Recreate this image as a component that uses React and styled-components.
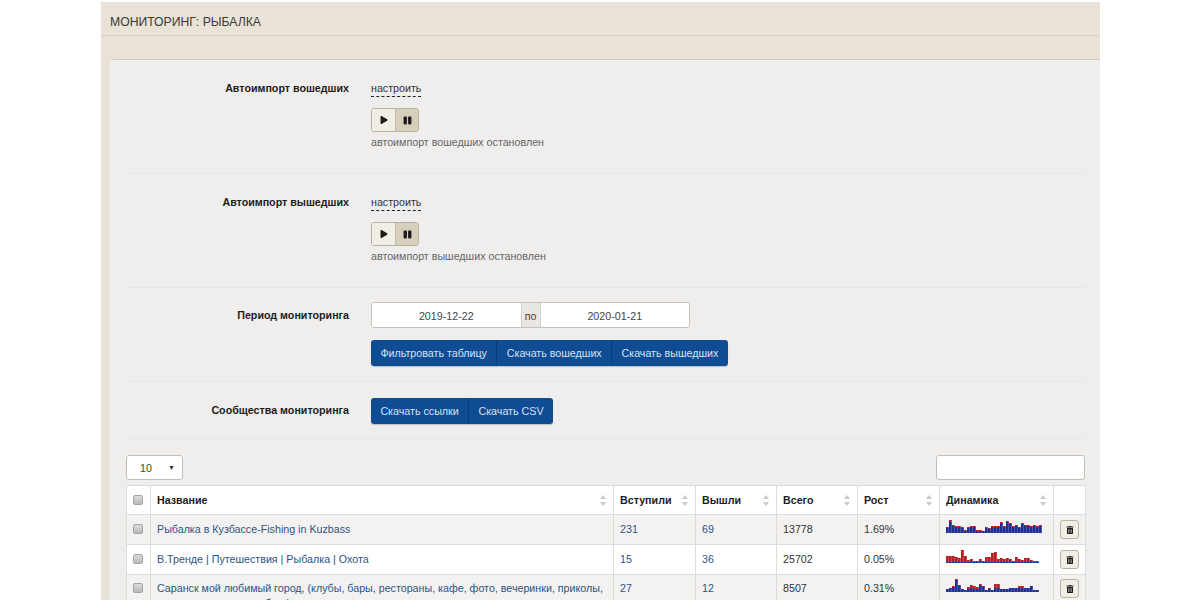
import React from "react";
import styled, { createGlobalStyle } from "styled-components";
import { FaPlay, FaPause, FaTrashAlt } from "react-icons/fa";

const GlobalStyle = createGlobalStyle`
  html, body {
    margin: 0;
    padding: 0;
    height: 600px;
    overflow: hidden;
    background: #fff;
    font-family: "Liberation Sans", Arial, sans-serif;
    font-size: 10.7px;
    color: #333;
  }
`;

const Page = styled.div`
  width: 999px;
  margin: 2px 0 0 101px;
  background: #e9e2d6;
  padding-left: 9px;
  box-sizing: border-box;
`;

const TitleBar = styled.div`
  height: 34px;
  margin-left: -9px;
  padding: 6px 0 0 9px;
  border-bottom: 1px solid #d8d0c2;
  display: flex;
  align-items: center;
  box-sizing: border-box;
  font-size: 12.2px;
  color: #3a3a38;
`;

const Panel = styled.div`
  margin-top: 23px;
  padding: 0 15px 0 14px;
  background: #efeeed;
  border-top: 1px solid #cfc9bd;
  border-top-left-radius: 4px;
  border-left: 1px solid #f6f5f3;
`;

const FormRow = styled.div`
  display: grid;
  grid-template-columns: 224px 1fr;
  column-gap: 22px;
  padding: ${(p) => p.$pad};
  border-bottom: 1px solid #e7e6e4;
`;

const RowLabel = styled.div`
  font-weight: bold;
  color: #1c1c1c;
  text-align: right;
  line-height: 14px;
  padding-top: ${(p) => p.$top || 0}px;
`;

const RowBody = styled.div`
  display: flex;
  flex-direction: column;
  align-items: flex-start;
`;

const SetupLink = styled.span`
  color: #333;
  line-height: 14px;
  padding-bottom: 1px;
  border-bottom: 1px dashed #222;
`;

const Toggle = styled.div`
  display: flex;
  margin-top: 11px;
  border: 1px solid #b9b2a2;
  border-radius: 3px;
  overflow: hidden;
`;

const ToggleButton = styled.div`
  width: 23px;
  height: 22px;
  box-sizing: border-box;
  display: flex;
  align-items: center;
  justify-content: center;
  font-size: ${(p) => (p.$active ? 9 : 8)}px;
  color: #1d1d1d;
  background: ${(p) => (p.$active ? "#d6cfbc" : "#f1eee5")};
  border-left: ${(p) => (p.$active ? "1px solid #c3bca9" : "0")};
`;

const Hint = styled.div`
  margin-top: 3px;
  color: #666;
  line-height: 14px;
`;

const DateGroup = styled.div`
  display: flex;
  width: 319px;
  height: 26px;
  box-sizing: border-box;
  border: 1px solid #c6c2ba;
  border-radius: 3px;
  overflow: hidden;
`;

const DateValue = styled.div`
  flex: 1;
  padding-top: 1px;
  background: #fff;
  display: flex;
  align-items: center;
  justify-content: center;
  color: #444;
`;

const DateAddon = styled.div`
  width: 20px;
  padding-top: 1px;
  box-sizing: border-box;
  background: #e9e7e4;
  border-left: 1px solid #d5d2cc;
  border-right: 1px solid #d5d2cc;
  display: flex;
  align-items: center;
  justify-content: center;
  color: #444;
`;

const ButtonGroup = styled.div`
  display: flex;
  margin-top: ${(p) => p.$top || 0}px;
  border-radius: 3px;
  overflow: hidden;
  box-shadow: 0 1px 1px rgba(0, 0, 0, 0.2);
`;

const BlueButton = styled.div`
  height: 26px;
  padding: 0 9.4px;
  display: flex;
  align-items: center;
  background: #0f4c93;
  color: #d6e2f0;
  white-space: nowrap;
  & + & {
    border-left: 1px solid #0b3c75;
  }
`;

const TableControls = styled.div`
  display: flex;
  justify-content: space-between;
  padding: 16px 0 5px;
`;

const PageSize = styled.div`
  width: 57px;
  height: 25px;
  margin-left: 1px;
  box-sizing: border-box;
  padding: 0 7px 0 13px;
  display: flex;
  align-items: center;
  justify-content: space-between;
  background: #fff;
  border: 1px solid #c2beb6;
  border-radius: 3px;
  color: #444;
`;

const Caret = styled.span`
  font-size: 7px;
  color: #333;
`;

const SearchBox = styled.div`
  width: 149px;
  height: 25px;
  box-sizing: border-box;
  background: #fff;
  border: 1px solid #c2beb6;
  border-radius: 3px;
`;

const Table = styled.table`
  table-layout: fixed;
  width: 959px;
  margin-left: 1px;
  border-collapse: collapse;
  font-size: 10.7px;
`;

const HeadCell = styled.th`
  height: 29px;
  padding: 0 6px;
  position: relative;
  box-sizing: border-box;
  background: #fff;
  border: 1px solid #dddcd9;
  text-align: left;
  font-weight: bold;
  color: #1c1c1c;
`;

const SortMark = styled.svg`
  position: absolute;
  right: 7px;
  top: 9px;
  width: 6px;
  height: 11px;
`;

const Row = styled.tr`
  background: ${(p) => (p.$odd ? "#f3f2f1" : "#fff")};
`;

const Cell = styled.td`
  height: 30px;
  padding: ${(p) => (p.$top === undefined ? "0 6px" : `${p.$top}px 6px`)};
  vertical-align: ${(p) => (p.$top === undefined ? "middle" : "top")};
  box-sizing: border-box;
  border: 1px solid #dddcd9;
  color: #333;
  line-height: 15px;
`;

const CheckCell = styled(Cell)`
  padding-left: 0;
  padding-right: 2px;
  text-align: center;
`;

const HeadCheckCell = styled(HeadCell)`
  padding: 0 2px 0 0;
  text-align: center;
`;

const Check = styled.span`
  display: inline-block;
  width: 10px;
  height: 10px;
  vertical-align: -1px;
  box-sizing: border-box;
  border: 1px solid #a5a5a5;
  border-radius: 2px;
  background: linear-gradient(#dcdcdc, #b9b9b9);
`;

const Link = styled.span`
  color: #2c5484;
`;

const SparkBox = styled.svg`
  display: block;
  margin-bottom: ${(p) => p.$gap}px;
`;

const TrashButton = styled.div`
  width: 17px;
  height: 17px;
  margin: 0 auto;
  display: flex;
  align-items: center;
  justify-content: center;
  font-size: 8px;
  color: #1d1d1d;
  background: #f1eee5;
  border: 1px solid #b9b2a2;
  border-radius: 3px;
`;

const columns = [
  { width: 24 },
  { width: 463, title: "Название" },
  { width: 82, title: "Вступили" },
  { width: 81, title: "Вышли" },
  { width: 81, title: "Всего" },
  { width: 82, title: "Рост" },
  { width: 114, title: "Динамика" },
  { width: 32 },
];

// [синие, красные]
const spark1 = [
  [5, 1], [11, 2], [7, 1], [6, 1], [6, 1], [5, 1], [2, 1], [5, 1], [6, 1], [6, 1], [2, 1],
  [2, 1], [2, 0], [5, 1], [4, 1], [6, 1], [6, 1], [6, 1], [10, 1], [6, 1], [11, 1], [9, 1],
  [6, 1], [7, 1], [5, 1], [9, 1], [7, 1], [7, 1], [6, 1], [7, 1], [6, 1], [7, 1],
];
const spark2 = [
  [1, 6], [1, 6], [1, 6], [1, 5], [1, 4], [1, 12], [1, 6], [1, 2], [1, 3], [1, 1], [1, 1],
  [1, 3], [1, 1], [1, 5], [1, 5], [1, 9], [1, 10], [1, 3], [1, 4], [1, 3], [1, 4], [1, 3],
  [1, 1], [1, 5], [1, 3], [1, 2], [1, 4], [1, 4], [1, 2], [1, 1], [1, 1],
];
const spark3 = [
  [3, 0], [4, 0], [5, 1], [12, 1], [6, 1], [3, 0], [2, 0], [3, 2], [4, 3], [3, 3], [3, 2],
  [7, 1], [5, 1], [2, 0], [3, 1], [2, 0], [4, 4], [4, 4], [3, 0], [3, 0], [3, 0], [4, 0],
  [4, 0], [4, 0], [4, 2], [4, 2], [4, 0], [4, 0], [6, 0], [2, 0], [2, 0],
];

const rows = [
  { name: "Рыбалка в Кузбассе-Fishing in Kuzbass", joined: 231, left: 69, total: 13778, growth: "1.69%", spark: spark1 },
  { name: "В.Тренде | Путешествия | Рыбалка | Охота", joined: 15, left: 36, total: 25702, growth: "0.05%", spark: spark2 },
  {
    name: "Саранск мой любимый город, (клубы, бары, рестораны, кафе, фото, вечеринки, приколы, новости, знакомства, блог)",
    joined: 27, left: 12, total: 8507, growth: "0.31%", spark: spark3, tall: true,
  },
];

const Sparkline = ({ data, gap }) => (
  <SparkBox width="96" height="14" $gap={gap}>
    {data.map(([blue, red], i) => (
      <g key={i}>
        <rect x={i * 3} y={14 - blue} width="2.8" height={blue} fill="#1f2f96" />
        <rect x={i * 3} y={14 - blue - red} width="2.8" height={red} fill="#b82022" />
      </g>
    ))}
  </SparkBox>
);

const Sort = () => (
  <SortMark viewBox="0 0 6 11">
    <path d="M3 0 L6 4 H0 Z M3 11 L0 7 H6 Z" fill="#c9c9c9" />
  </SortMark>
);

const PlayToggle = () => (
  <Toggle>
    <ToggleButton><FaPlay /></ToggleButton>
    <ToggleButton $active><FaPause /></ToggleButton>
  </Toggle>
);

export default function App() {
  return (
    <>
      <GlobalStyle />
      <Page>
        <TitleBar>МОНИТОРИНГ: РЫБАЛКА</TitleBar>
        <Panel>
          <FormRow $pad="21px 0 24px">
            <RowLabel>Автоимпорт вошедших</RowLabel>
            <RowBody>
              <SetupLink>настроить</SetupLink>
              <PlayToggle />
              <Hint>автоимпорт вошедших остановлен</Hint>
            </RowBody>
          </FormRow>
          <FormRow $pad="21px 0 24px">
            <RowLabel>Автоимпорт вышедших</RowLabel>
            <RowBody>
              <SetupLink>настроить</SetupLink>
              <PlayToggle />
              <Hint>автоимпорт вышедших остановлен</Hint>
            </RowBody>
          </FormRow>
          <FormRow $pad="14px 0 15px">
            <RowLabel $top={6}>Период мониторинга</RowLabel>
            <RowBody>
              <DateGroup>
                <DateValue>2019-12-22</DateValue>
                <DateAddon>по</DateAddon>
                <DateValue>2020-01-21</DateValue>
              </DateGroup>
              <ButtonGroup $top={12}>
                <BlueButton>Фильтровать таблицу</BlueButton>
                <BlueButton>Скачать вошедших</BlueButton>
                <BlueButton>Скачать вышедших</BlueButton>
              </ButtonGroup>
            </RowBody>
          </FormRow>
          <FormRow $pad="16px 0 14px">
            <RowLabel $top={5}>Сообщества мониторинга</RowLabel>
            <RowBody>
              <ButtonGroup>
                <BlueButton>Скачать ссылки</BlueButton>
                <BlueButton>Скачать CSV</BlueButton>
              </ButtonGroup>
            </RowBody>
          </FormRow>
          <TableControls>
            <PageSize>10 <Caret>▼</Caret></PageSize>
            <SearchBox />
          </TableControls>
          <Table>
            <colgroup>
              {columns.map((c, i) => <col key={i} style={{ width: c.width }} />)}
            </colgroup>
            <thead>
              <tr>
                <HeadCheckCell><Check /></HeadCheckCell>
                {columns.slice(1, -1).map((c) => (
                  <HeadCell key={c.title}>{c.title}<Sort /></HeadCell>
                ))}
                <HeadCell />
              </tr>
            </thead>
            <tbody>
              {rows.map((r, i) => (
                <Row key={r.total} $odd={i % 2 === 0}>
                  <CheckCell $top={r.tall ? 6 : undefined}><Check /></CheckCell>
                  <Cell $top={r.tall ? 6 : undefined}><Link>{r.name}</Link></Cell>
                  <Cell $top={r.tall ? 6 : undefined}><Link>{r.joined}</Link></Cell>
                  <Cell $top={r.tall ? 6 : undefined}><Link>{r.left}</Link></Cell>
                  <Cell $top={r.tall ? 6 : undefined}>{r.total}</Cell>
                  <Cell $top={r.tall ? 6 : undefined}>{r.growth}</Cell>
                  <Cell $top={r.tall ? 3 : undefined}><Sparkline data={r.spark} gap={r.tall ? 0 : 8} /></Cell>
                  <Cell $top={r.tall ? 4 : undefined}><TrashButton><FaTrashAlt /></TrashButton></Cell>
                </Row>
              ))}
            </tbody>
          </Table>
        </Panel>
      </Page>
    </>
  );
}
